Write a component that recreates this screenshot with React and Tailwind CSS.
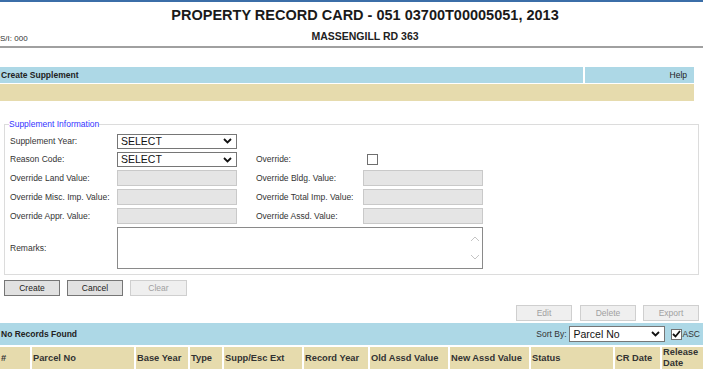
import React from 'react';

const Chevron = () => (
  <svg width="9" height="6" viewBox="0 0 9 6" className="shrink-0">
    <path d="M1 1 L4.5 4.5 L8 1" fill="none" stroke="#111" strokeWidth="1.8" />
  </svg>
);

function FakeSelect({ value, className = '' }) {
  return (
    <div
      className={`flex items-center justify-between border border-[#767676] bg-white pl-[3px] pr-[4px] text-[10.5px] leading-none text-[#111] ${className}`}
    >
      <span>{value}</span>
      <Chevron />
    </div>
  );
}

function GrayInput() {
  return <div className="h-[16px] w-[120px] border border-[#c9c9c9] bg-[#e5e5e5]" />;
}

function Checkbox({ checked }) {
  return (
    <div className="flex h-[11px] w-[11px] items-center justify-center border border-[#6f6f6f] bg-white">
      {checked && (
        <svg width="9" height="8" viewBox="0 0 9 8">
          <path d="M1 4 L3.5 6.5 L8 1" fill="none" stroke="#111" strokeWidth="1.8" />
        </svg>
      )}
    </div>
  );
}

function Row({ label, control, label2, control2, h = 'h-[16px]' }) {
  return (
    <div className={`flex items-center ${h}`}>
      <div className="w-[107px]">{label}</div>
      <div className="w-[120px]">{control}</div>
      {label2 && <div className="ml-[19px] w-[107px]">{label2}</div>}
      {control2 && <div className="w-[120px]">{control2}</div>}
    </div>
  );
}

function Btn({ children, disabled, className = '' }) {
  return (
    <button
      className={`h-[16px] w-[56px] text-[8.5px] leading-none ${
        disabled
          ? 'border border-[#cfcfcf] bg-[#efefef] text-[#a0a0a0]'
          : 'border border-[#767676] bg-[#e1e1e1] text-[#222]'
      } ${className}`}
    >
      {children}
    </button>
  );
}

const columns = [
  { label: '#', w: 'w-[30px]' },
  { label: 'Parcel No', w: 'w-[102px]' },
  { label: 'Base Year', w: 'w-[52px]' },
  { label: 'Type', w: 'w-[32px]' },
  { label: 'Supp/Esc Ext', w: 'w-[78px]' },
  { label: 'Record Year', w: 'w-[64px]' },
  { label: 'Old Assd Value', w: 'w-[78px]' },
  { label: 'New Assd Value', w: 'w-[79px]' },
  { label: 'Status', w: 'w-[82px]' },
  { label: 'CR Date', w: 'w-[45px]' },
  { label: 'Release Date', w: 'flex-1' },
];

export default function App() {
  return (
    <div className="h-[380px] w-[703px] overflow-hidden bg-white font-['Liberation_Sans',Arial,sans-serif] text-[8.5px] text-[#333]">
      {/* Header */}
      <div className="w-[730px] border-t-2 border-[#3b6ea8]">
        <h1 className="pt-[4px] text-center text-[14.5px] font-bold leading-[18px] text-[#1a1a1a]">
          PROPERTY RECORD CARD - 051 03700T00005051, 2013
        </h1>
        <div className="grid h-[22px] grid-cols-[1fr_auto_1fr]">
          <div className="pt-[10px] text-[8px] leading-[10px]">S/I: 000</div>
          <div className="pt-[6px] text-[10.5px] font-bold leading-[12px] text-[#222]">
            MASSENGILL RD 363
          </div>
          <div />
        </div>
      </div>
      <div className="h-[2px] bg-[#a0a0a0]" />

      {/* Title bar */}
      <div className="mt-[19px] flex h-[16px] w-[694px] gap-[2px] leading-[16px]">
        <div className="flex-1 bg-[#add8e6] pl-[1px] font-bold text-[#222]">Create Supplement</div>
        <div className="w-[109px] bg-[#add8e6] pr-[7px] text-right text-[#222]">Help</div>
      </div>
      <div className="mt-[1px] h-[17px] w-[694px] bg-[#e6dbad]" />

      {/* Supplement Information */}
      <fieldset className="ml-[4px] mt-[18px] w-[695px] border border-[#dcdcdc] px-[5px] pb-[5px] pt-[4px]">
        <legend className="-ml-[1px] text-[8.5px] leading-[10px] text-[#3333ff]">Supplement Information</legend>
        <div className="flex flex-col gap-[3px]">
          <Row label="Supplement Year:" control={<FakeSelect value="SELECT" className="h-[15px]" />} h="h-[16px]" />
          <Row
            label="Reason Code:"
            control={<FakeSelect value="SELECT" className="h-[15px]" />}
            label2="Override:"
            control2={
              <div className="pl-[4px]">
                <Checkbox />
              </div>
            }
            h="h-[15px]"
          />
          <Row
            label="Override Land Value:"
            control={<GrayInput />}
            label2="Override Bldg. Value:"
            control2={<GrayInput />}
          />
          <Row
            label="Override Misc. Imp. Value:"
            control={<GrayInput />}
            label2="Override Total Imp. Value:"
            control2={<GrayInput />}
          />
          <Row
            label="Override Appr. Value:"
            control={<GrayInput />}
            label2="Override Assd. Value:"
            control2={<GrayInput />}
          />
          <div className="flex h-[42px] items-center">
            <div className="w-[107px]">Remarks:</div>
            <div className="flex h-[42px] w-[366px] justify-end border border-[#8a8a8a] bg-white pr-[2px]">
              <div className="flex flex-col justify-between py-[8px]">
                <svg width="10" height="6" viewBox="0 0 10 6">
                  <path d="M1 5 L5 1 L9 5" fill="none" stroke="#c4c4c4" strokeWidth="1" />
                </svg>
                <svg width="10" height="6" viewBox="0 0 10 6">
                  <path d="M1 1 L5 5 L9 1" fill="none" stroke="#c4c4c4" strokeWidth="1" />
                </svg>
              </div>
            </div>
          </div>
        </div>
      </fieldset>

      {/* Actions */}
      <div className="ml-[4px] mt-[5px] flex gap-[7px]">
        <Btn>Create</Btn>
        <Btn>Cancel</Btn>
        <Btn disabled className="w-[57px]">Clear</Btn>
      </div>
      <div className="mt-[9px] flex justify-end gap-[7px] pr-[4px]">
        <Btn disabled className="h-[15px] mr-[1px]">Edit</Btn>
        <Btn disabled className="h-[15px]">Delete</Btn>
        <Btn disabled className="h-[15px]">Export</Btn>
      </div>

      {/* Results bar */}
      <div className="mt-[2px] flex h-[22px] items-center justify-between bg-[#add8e6]">
        <div className="pl-[1px] font-bold text-[#222]">No Records Found</div>
        <div className="flex items-center pr-[3px]">
          <span className="mr-[2px]">Sort By:</span>
          <FakeSelect value="Parcel No" className="h-[16px] w-[96px] pl-[4px]" />
          <div className="ml-[6px]">
            <Checkbox checked />
          </div>
          <span className="ml-[1px]">ASC</span>
        </div>
      </div>

      {/* Table header */}
      <div className="mt-[2px] flex h-[22px] gap-[2px] text-[9.3px] font-bold leading-[11px] text-[#333]">
        {columns.map((c) => (
          <div key={c.label} className={`${c.w} flex items-center bg-[#e6dbad] pl-[1px]`}>
            {c.label}
          </div>
        ))}
      </div>
    </div>
  );
}
